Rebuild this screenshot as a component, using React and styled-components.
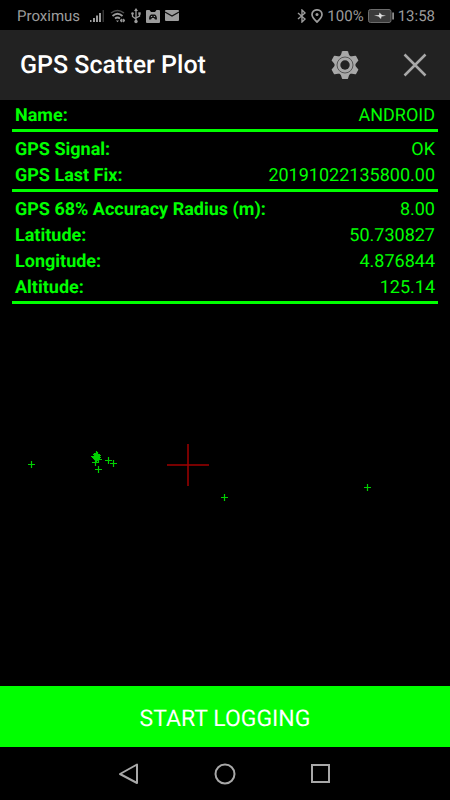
import React from "react";
import styled, { createGlobalStyle } from "styled-components";

const GlobalStyle = createGlobalStyle`
  * {
    box-sizing: border-box;
  }

  body {
    margin: 0;
    background-color: #000;
    font-family: Roboto, "Liberation Sans", sans-serif;
    text-rendering: geometricPrecision;
  }
`;

const Screen = styled.div`
  min-height: 100vh;
  display: flex;
  flex-direction: column;
  background-color: #000;
  color: #0f0;
`;

const StatusBar = styled.div`
  height: 30px;
  padding: 2px 15px 0 17px;
  display: flex;
  align-items: center;
  justify-content: space-between;
  color: #9c9c9c;
  font-size: 15px;
`;

const StatusGroup = styled.div`
  display: flex;
  align-items: center;
  gap: ${(props) => props.$gap}px;
`;

const Carrier = styled.span`
  margin-right: 5px;
`;

const Header = styled.header`
  height: 70px;
  padding: 0 20px;
  display: flex;
  align-items: center;
  background-color: #222;
`;

const Title = styled.h1`
  flex: 1;
  margin: 0;
  color: #fff;
  font-size: 25px;
  font-weight: 500;
`;

const IconButton = styled.button`
  display: flex;
  padding: 0;
  border: none;
  background: none;
  color: #a8a8a8;
  cursor: pointer;
`;

const HeaderActions = styled.div`
  display: flex;
  gap: 40px;
`;

const Info = styled.dl`
  margin: 0 12px;
  padding-top: 3px;
`;

const Section = styled.div`
  border-bottom: 3px solid #0f0;

  & + & {
    padding-top: 5px;
  }
`;

const Row = styled.div`
  padding: 0 3px;
  display: flex;
  justify-content: space-between;
  font-size: 18px;
  line-height: 26px;
`;

const Label = styled.dt`
  font-weight: 700;
`;

const Value = styled.dd`
  margin: 0;
`;

const PlotArea = styled.main`
  flex: 1;
  display: flex;
  align-items: center;
`;

const Plot = styled.svg`
  width: 100%;
  display: block;
`;

const LogButton = styled.button`
  height: 61px;
  padding-top: 4px;
  border: none;
  background-color: #0f0;
  color: #fff;
  font-family: inherit;
  font-size: 23px;
  text-rendering: inherit;
  cursor: pointer;
`;

const NavBar = styled.nav`
  height: 53px;
  display: flex;
  align-items: center;
  justify-content: center;
  gap: 72px;
`;

const sections = [
  [["Name:", "ANDROID"]],
  [
    ["GPS Signal:", "OK"],
    ["GPS Last Fix:", "20191022135800.00"],
  ],
  [
    ["GPS 68% Accuracy Radius (m):", "8.00"],
    ["Latitude:", "50.730827"],
    ["Longitude:", "4.876844"],
    ["Altitude:", "125.14"],
  ],
];

const fixes = [
  [31, 160],
  [95, 152],
  [96, 150],
  [96, 152],
  [97, 153],
  [96, 154],
  [97, 151],
  [95, 153],
  [94, 152],
  [95, 158],
  [98, 155],
  [98, 165],
  [108, 156],
  [113, 159],
  [224, 193],
  [367, 183],
];

const SignalIcon = () => (
  <svg width="15" height="14" viewBox="0 0 15 14" fill="currentColor">
    <path d="M0 11h1.500v2H0zM3 9h2v4H3zM6 6.500h2V13H6zM9 4h2v9H9z" />
    <path d="M12.500 1H14v12h-1.500z" opacity=".35" />
  </svg>
);

const WifiIcon = () => (
  <svg width="16" height="14" viewBox="0 0 16 14" fill="none" stroke="currentColor">
    <path d="M1 4q6.500-5 13 0" strokeWidth="1.500" opacity=".5" />
    <path d="M2.500 7q5-4.500 10 0M5 9.500q2.500-2 5 0" strokeWidth="1.800" />
    <path d="M6 11.500h3l-1.500 1.800z" fill="currentColor" stroke="none" />
    <path d="M10 11.500l1.800-1.500v3zM15 11.500L13.200 10v3z" fill="currentColor" />
  </svg>
);

const UsbIcon = () => (
  <svg width="10" height="16" viewBox="0 0 10 16" fill="currentColor">
    <path d="M5 2v11M1.500 6v2.500L5 11M8.500 6v2L5 10" fill="none" stroke="currentColor" strokeWidth="1.300" />
    <path d="M5 0l2 3H3z" />
    <circle cx="5" cy="13.500" r="1.700" />
    <circle cx="1.500" cy="5.500" r="1.300" />
    <path d="M7.300 4.300h2.400v2.400H7.300z" />
  </svg>
);

const BadgeIcon = () => (
  <svg width="14" height="13" viewBox="0 0 14 13" fill="currentColor">
    <path d="M1 0h2.500l1.500 2h4l1.500-2H13q1 0 1 1v11q0 1-1 1H1q-1 0-1-1V1q0-1 1-1z" />
    <path d="M3 9.500Q3 5.500 5 4.500h4q2 1 2 5H9L8 8H6l-1 1.500z" fill="#111" />
    <path d="M5 6.500h1.200M7.800 6.500H9" stroke="currentColor" />
  </svg>
);

const MailIcon = () => (
  <svg width="14" height="12" viewBox="0 0 14 12" fill="currentColor">
    <rect width="14" height="11" rx="1" />
    <path d="M0 2l7 4 7-4" fill="none" stroke="#111" strokeWidth="1.200" />
  </svg>
);

const BluetoothIcon = () => (
  <svg width="10" height="14" viewBox="0 0 10 14" fill="none" stroke="currentColor" strokeWidth="1.400">
    <path d="M1 4l7 6-3 3V1l3 3-7 6" />
  </svg>
);

const LocationIcon = () => (
  <svg width="12" height="14" viewBox="0 0 12 14">
    <path d="M6 13Q1 8.500 1 5.500a5 4.700 0 0 1 10 0Q11 8.500 6 13z" fill="none" stroke="currentColor" strokeWidth="1.700" />
    <circle cx="6" cy="5.500" r="1.500" fill="currentColor" />
  </svg>
);

const BatteryIcon = () => (
  <svg width="26" height="14" viewBox="0 0 26 14">
    <rect x=".5" y=".5" width="22.500" height="13" rx="2" fill="#3c3c3c" stroke="#6c6c6c" />
    <path d="M24.200 3.500H26v7h-1.800z" fill="#8c8c8c" />
    <path d="M6 6.500l5-.5.500-2.500 2.500 2.500 4 .8-4.500.7-.5 2.500-2.500-2.500z" fill="#ddd" />
  </svg>
);

const GearIcon = () => (
  <svg width="30" height="30" viewBox="-15 -15 30 30">
    <g fill="currentColor">
      {[0, 60, 120, 180, 240, 300].map((angle) => (
        <path key={angle} d="M-4.500 -9L-3 -13.500Q-2.800 -14 -2.200 -14H2.200Q2.800 -14 3 -13.500L4.500 -9z" transform={`rotate(${angle})`} />
      ))}
      <circle r="10.500" />
    </g>
    <circle r="8" fill="none" stroke="#555" strokeWidth="1" />
    <circle r="4.700" fill="#222" />
  </svg>
);

const CloseIcon = () => (
  <svg width="30" height="30" viewBox="0 0 30 30" stroke="currentColor" strokeWidth="2.500">
    <path d="M4.500 4.500l21 21M25.500 4.500l-21 21" />
  </svg>
);

const App = () => {
  return (
    <>
      <GlobalStyle />
      <Screen>
        <StatusBar>
          <StatusGroup $gap={5}>
            <Carrier>Proximus</Carrier>
            <SignalIcon />
            <WifiIcon />
            <UsbIcon />
            <BadgeIcon />
            <MailIcon />
          </StatusGroup>
          <StatusGroup $gap={4}>
            <BluetoothIcon />
            <LocationIcon />
            <span>100%</span>
            <BatteryIcon />
            <span>13:58</span>
          </StatusGroup>
        </StatusBar>

        <Header>
          <Title>GPS Scatter Plot</Title>
          <HeaderActions>
            <IconButton aria-label="Settings">
              <GearIcon />
            </IconButton>
            <IconButton aria-label="Close">
              <CloseIcon />
            </IconButton>
          </HeaderActions>
        </Header>

        <Info>
          {sections.map((rows) => (
            <Section key={rows[0][0]}>
              {rows.map(([label, value]) => (
                <Row key={label}>
                  <Label>{label}</Label>
                  <Value>{value}</Value>
                </Row>
              ))}
            </Section>
          ))}
        </Info>

        <PlotArea>
          <Plot viewBox="0 0 450 382" role="img" aria-label="Scatter plot of GPS fixes">
            <path d="M188 140v42M167 161h42" stroke="#a00000" strokeWidth="1.500" />
            {fixes.map(([x, y]) => (
              <path key={`${x},${y}`} d={`M${x + 0.5} ${y - 3}v7M${x - 3} ${y + 0.5}h7`} stroke="#00d000" strokeWidth="1.200" />
            ))}
          </Plot>
        </PlotArea>

        <LogButton>START LOGGING</LogButton>

        <NavBar>
          <IconButton aria-label="Back">
            <svg width="24" height="24" viewBox="0 0 24 24" fill="none" stroke="currentColor" strokeWidth="2" strokeLinejoin="round">
              <path d="M20 2.500v18.500L3 12z" />
            </svg>
          </IconButton>
          <IconButton aria-label="Home">
            <svg width="24" height="24" viewBox="0 0 24 24" fill="none" stroke="currentColor" strokeWidth="2">
              <circle cx="12" cy="12" r="9.500" />
            </svg>
          </IconButton>
          <IconButton aria-label="Recent apps">
            <svg width="24" height="24" viewBox="0 0 24 24" fill="none" stroke="currentColor" strokeWidth="2">
              <rect x="3" y="3" width="17" height="17" />
            </svg>
          </IconButton>
        </NavBar>
      </Screen>
    </>
  );
};

export default App;
